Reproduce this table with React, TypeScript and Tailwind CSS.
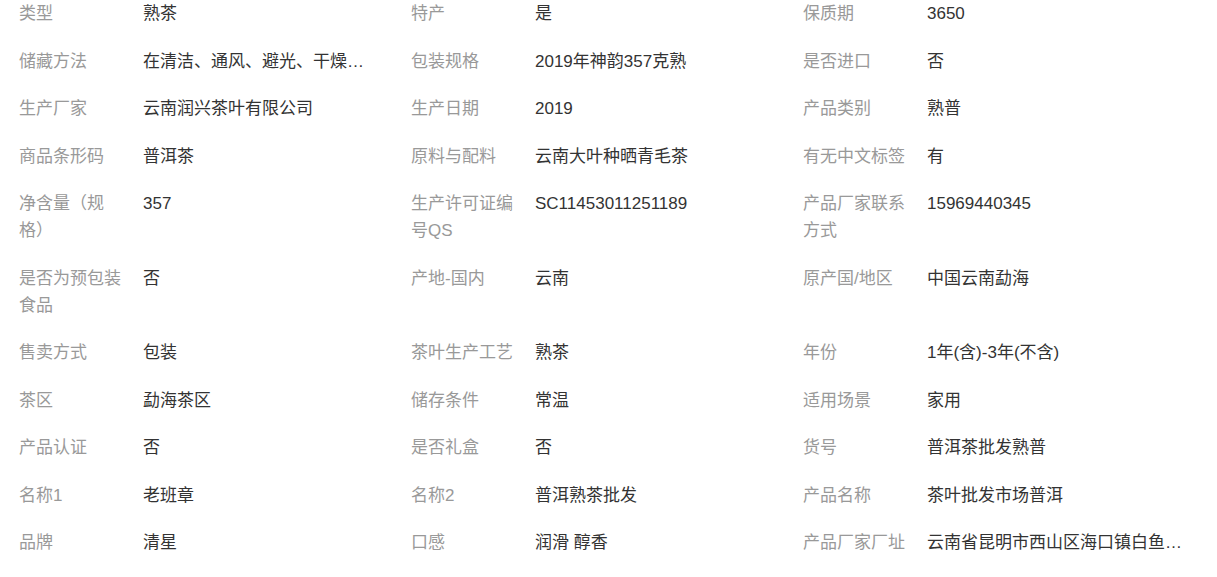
import * as React from 'react';

type Attr = { label: string; value: string };

const rows: Attr[][] = [
  [
    { label: '类型', value: '熟茶' },
    { label: '特产', value: '是' },
    { label: '保质期', value: '3650' },
  ],
  [
    { label: '储藏方法', value: '在清洁、通风、避光、干燥处常温保存' },
    { label: '包装规格', value: '2019年神韵357克熟' },
    { label: '是否进口', value: '否' },
  ],
  [
    { label: '生产厂家', value: '云南润兴茶叶有限公司' },
    { label: '生产日期', value: '2019' },
    { label: '产品类别', value: '熟普' },
  ],
  [
    { label: '商品条形码', value: '普洱茶' },
    { label: '原料与配料', value: '云南大叶种晒青毛茶' },
    { label: '有无中文标签', value: '有' },
  ],
  [
    { label: '净含量（规格）', value: '357' },
    { label: '生产许可证编号QS', value: 'SC11453011251189' },
    { label: '产品厂家联系方式', value: '15969440345' },
  ],
  [
    { label: '是否为预包装食品', value: '否' },
    { label: '产地-国内', value: '云南' },
    { label: '原产国/地区', value: '中国云南勐海' },
  ],
  [
    { label: '售卖方式', value: '包装' },
    { label: '茶叶生产工艺', value: '熟茶' },
    { label: '年份', value: '1年(含)-3年(不含)' },
  ],
  [
    { label: '茶区', value: '勐海茶区' },
    { label: '储存条件', value: '常温' },
    { label: '适用场景', value: '家用' },
  ],
  [
    { label: '产品认证', value: '否' },
    { label: '是否礼盒', value: '否' },
    { label: '货号', value: '普洱茶批发熟普' },
  ],
  [
    { label: '名称1', value: '老班章' },
    { label: '名称2', value: '普洱熟茶批发' },
    { label: '产品名称', value: '茶叶批发市场普洱' },
  ],
  [
    { label: '品牌', value: '清星' },
    { label: '口感', value: '润滑 醇香' },
    { label: '产品厂家厂址', value: '云南省昆明市西山区海口镇白鱼口村' },
  ],
];

const App: React.FC = () => {
  return (
    <div
      className="min-h-screen bg-white pl-[19px] text-[17px] leading-[27px]"
      style={{ fontFamily: '"Liberation Sans", "Noto Sans CJK SC", sans-serif' }}
    >
      <div className="grid grid-cols-[392px_392px_392px]">
        {rows.map((row, ri) =>
          row.map((item, ci) => (
            <div key={`${ri}-${ci}`} className="flex pb-[20.5px]">
              <div className="w-[124px] shrink-0 pr-[14px] text-[#999]">{item.label}</div>
              <div
                className={`overflow-hidden text-ellipsis whitespace-nowrap text-[#333] ${
                  ci === 2 ? 'w-[266px]' : 'w-[236px]'
                }`}
              >
                {item.value}
              </div>
            </div>
          ))
        )}
      </div>
    </div>
  );
};

export default App;
